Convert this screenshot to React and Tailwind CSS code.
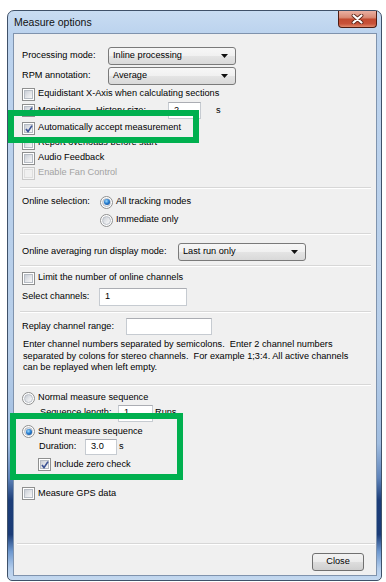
import React from "react";

function Check({ checked = false, disabled = false }) {
  return (
    <span
      className={
        disabled
          ? "relative flex-none w-[13px] h-[13px] border border-[#c9c9c9] bg-[#f4f4f4] p-[1px] flex"
          : "relative flex-none w-[13px] h-[13px] border border-[#8e8f8f] bg-white p-[1px] flex"
      }
    >
      <span
        className={
          disabled
            ? "flex-1 border border-[#dedede] bg-[#f0f0f0]"
            : "flex-1 border border-[#b6bcc4] bg-[linear-gradient(135deg,#c9ced6_0%,#e2e4e8_50%,#f7f7f7_100%)]"
        }
      />
      {checked && (
        <svg className="absolute left-[1px] top-[1px]" width="10" height="10" viewBox="0 0 10 10">
          <path d="M2 5 L4 7.6 L8 1.6" fill="none" stroke="#3d5494" strokeWidth="1.7" />
        </svg>
      )}
    </span>
  );
}

function Radio({ checked = false }) {
  return (
    <span className="relative flex-none w-[13px] h-[13px] rounded-full border border-[#8e8f8f] bg-white p-[1px] flex">
      <span className="flex-1 rounded-full border border-[#b9bec6] bg-[linear-gradient(135deg,#c6cbd2_0%,#e6e8eb_55%,#fafafa_100%)] flex items-center justify-center">
        {checked && (
          <span className="w-[6px] h-[6px] rounded-full bg-[radial-gradient(circle_at_40%_35%,#9fdcff_0%,#2a7fd0_45%,#0b3f86_100%)]" />
        )}
      </span>
    </span>
  );
}

function Combo({ value, className }) {
  return (
    <div
      className={
        "h-[18px] flex items-center pl-[4px] pr-[7px] border border-[#7a7a7a] rounded-[3px] bg-[linear-gradient(to_bottom,#f7f7f7_0%,#f0f0f0_50%,#e4e4e4_51%,#d9d9d9_100%)] " +
        className
      }
    >
      <span className="flex-1 leading-none">{value}</span>
      <svg width="7" height="4" viewBox="0 0 7 4">
        <path d="M0 0 L7 0 L3.5 4 Z" fill="#111" />
      </svg>
    </div>
  );
}

function Input({ value = "", className }) {
  return (
    <div
      className={
        "bg-white border border-[#c6cbd1] border-t-[#abadb3] flex items-center pl-[5px] leading-none " +
        className
      }
    >
      {value}
    </div>
  );
}

function Sep({ className }) {
  return <div className={"h-[2px] border-t border-[#d7d7d7] border-b border-b-white " + className} />;
}

export default function App() {
  return (
    <div className="relative w-[386px] h-[582px] bg-white overflow-hidden font-['Liberation_Sans',Arial,sans-serif] text-black text-[9.2px]">
      <div className="pt-[10px] pl-[7px]">
        {/* window */}
        <div className="w-[375px] h-[571px] rounded-t-[7px] rounded-b-[5px] border border-[#3f5169] pl-[5px] pr-[4px] pb-[4px] flex flex-col bg-[linear-gradient(to_bottom,#c8dcf2_0%,#bcd3ee_4%,#b7cee9_60%,#a0bde0_76%,#5f84ba_82%,#1c3d78_86%,#1b3c77_92%,#6d98cf_95%,#b3cdec_98%,#c5d9ef_100%)]">
          {/* title bar */}
          <div className="h-[22px] flex items-start justify-between flex-none">
            <span className="pl-[1px] pt-[6px] text-[10.5px] leading-none text-[#111]">
              Measure options
            </span>
            <div className="w-[39px] h-[17px] rounded-b-[4px] border border-t-0 border-[#4e1c12] bg-[linear-gradient(to_bottom,#eab0a2_0%,#d98b76_40%,#c24b31_52%,#c8523a_80%,#e08a6d_100%)] flex items-center justify-center">
              <svg width="13" height="10" viewBox="0 0 13 10">
                <path d="M2.5 1.5 L10.5 8.5 M10.5 1.5 L2.5 8.5" stroke="#5a2418" strokeWidth="3.8" strokeLinecap="round" />
                <path d="M2.5 1.5 L10.5 8.5 M10.5 1.5 L2.5 8.5" stroke="#ffffff" strokeWidth="2.2" strokeLinecap="round" />
              </svg>
            </div>
          </div>

          {/* client */}
          <div className="w-[364px] h-[543px] border border-[#7f93ad] bg-[#f0f0f0] flex flex-col">
            <div className="pl-[8px] flex flex-col">
              <div className="mt-[13px] h-[18px] flex items-center">
                <span className="w-[86px]">Processing mode:</span>
                <Combo value="Inline processing" className="w-[128px]" />
              </div>
              <div className="mt-[2px] h-[18px] flex items-center">
                <span className="w-[86px]">RPM annotation:</span>
                <Combo value="Average" className="w-[128px]" />
              </div>
              <div className="mt-[2px] h-[14px] flex items-center gap-[3px]">
                <Check />
                <span>Equidistant X-Axis when calculating sections</span>
              </div>
              <div className="mt-[1px] h-[17px] flex items-center">
                <span className="w-[74px] flex items-center gap-[3px]">
                  <Check checked />
                  <span>Monitoring</span>
                </span>
                <span className="w-[72px]">History size:</span>
                <Input value="2" className="w-[33px] h-[17px]" />
                <span className="ml-[15px]">s</span>
              </div>
              <div className="mt-[2px] h-[14px] flex items-center gap-[3px]">
                <Check checked />
                <span>Automatically accept measurement</span>
              </div>
              <div className="mt-[1px] h-[14px] flex items-center gap-[3px]">
                <Check />
                <span>Report overloads before start</span>
              </div>
              <div className="mt-[1px] h-[14px] flex items-center gap-[3px]">
                <Check />
                <span>Audio Feedback</span>
              </div>
              <div className="mt-[1px] h-[14px] flex items-center gap-[3px]">
                <Check disabled />
                <span className="text-[#a3a3a3]">Enable Fan Control</span>
              </div>
            </div>

            <Sep className="mt-[7px] ml-[6px] w-[351px]" />

            <div className="pl-[8px] flex flex-col">
              <div className="mt-[6px] h-[14px] flex items-center">
                <span className="w-[78px]">Online selection:</span>
                <Radio checked />
                <span className="ml-[3px]">All tracking modes</span>
              </div>
              <div className="mt-[4px] h-[14px] flex items-center pl-[78px]">
                <Radio />
                <span className="ml-[3px]">Immediate only</span>
              </div>
            </div>

            <Sep className="mt-[6px] ml-[6px] w-[351px]" />

            <div className="pl-[8px] flex flex-col">
              <div className="mt-[8px] h-[18px] flex items-center">
                <span className="w-[156px]">Online averaging run display mode:</span>
                <Combo value="Last run only" className="w-[128px]" />
              </div>
            </div>

            <Sep className="mt-[4px] ml-[6px] w-[351px]" />

            <div className="pl-[8px] flex flex-col">
              <div className="mt-[4px] h-[14px] flex items-center gap-[3px]">
                <Check />
                <span>Limit the number of online channels</span>
              </div>
              <div className="mt-[3px] h-[18px] flex items-center">
                <span className="w-[77px]">Select channels:</span>
                <Input value="1" className="w-[88px] h-[18px]" />
              </div>
            </div>

            <Sep className="mt-[5px] ml-[6px] w-[351px]" />

            <div className="pl-[8px] flex flex-col">
              <div className="mt-[5px] h-[17px] flex items-center">
                <span className="w-[104px]">Replay channel range:</span>
                <Input className="w-[86px] h-[17px]" />
              </div>
              <p className="mt-[4px] pl-[1px] leading-[11.5px] whitespace-pre">
                {"Enter channel numbers separated by semicolons.  Enter 2 channel numbers\nseparated by colons for stereo channels.  For example 1;3:4. All active channels\ncan be replayed when left empty."}
              </p>
            </div>

            <Sep className="mt-[10px] ml-[6px] w-[351px]" />

            <div className="pl-[8px] flex flex-col">
              <div className="mt-[6px] h-[13px] flex items-center">
                <Radio />
                <span className="ml-[3px]">Normal measure sequence</span>
              </div>
              <div className="h-[17px] flex items-center pl-[18px]">
                <span className="w-[78px]">Sequence length:</span>
                <Input value="1" className="w-[35px] h-[17px]" />
                <span className="ml-[2px]">Runs</span>
              </div>
              <div className="mt-[3px] h-[14px] flex items-center">
                <Radio checked />
                <span className="ml-[3px]">Shunt measure sequence</span>
              </div>
              <div className="h-[16px] flex items-center pl-[17px]">
                <span className="w-[46px]">Duration:</span>
                <Input value="3.0" className="w-[32px] h-[16px]" />
                <span className="ml-[2px]">s</span>
              </div>
              <div className="mt-[3px] h-[14px] flex items-center pl-[16px] gap-[3px]">
                <Check checked />
                <span>Include zero check</span>
              </div>
              <div className="mt-[15px] h-[14px] flex items-center gap-[3px]">
                <Check />
                <span>Measure GPS data</span>
              </div>
            </div>

            <Sep className="mt-[42px] ml-[3px] w-[358px]" />

            <div className="mt-[8px] flex justify-end pr-[12px]">
              <div className="w-[52px] h-[18px] border border-[#707070] rounded-[3px] bg-[linear-gradient(to_bottom,#f2f2f2_0%,#ebebeb_50%,#dddddd_51%,#cfcfcf_100%)] flex items-center justify-center leading-none">
                Close
              </div>
            </div>
          </div>
        </div>
      </div>

      {/* annotation boxes */}
      <div className="absolute left-[8px] top-[110px] w-[191px] h-[33px] border-[6px] border-[#00b04f]" />
      <div className="absolute left-[10px] top-[413px] w-[173px] h-[67px] border-[6px] border-[#00b04f]" />
    </div>
  );
}
